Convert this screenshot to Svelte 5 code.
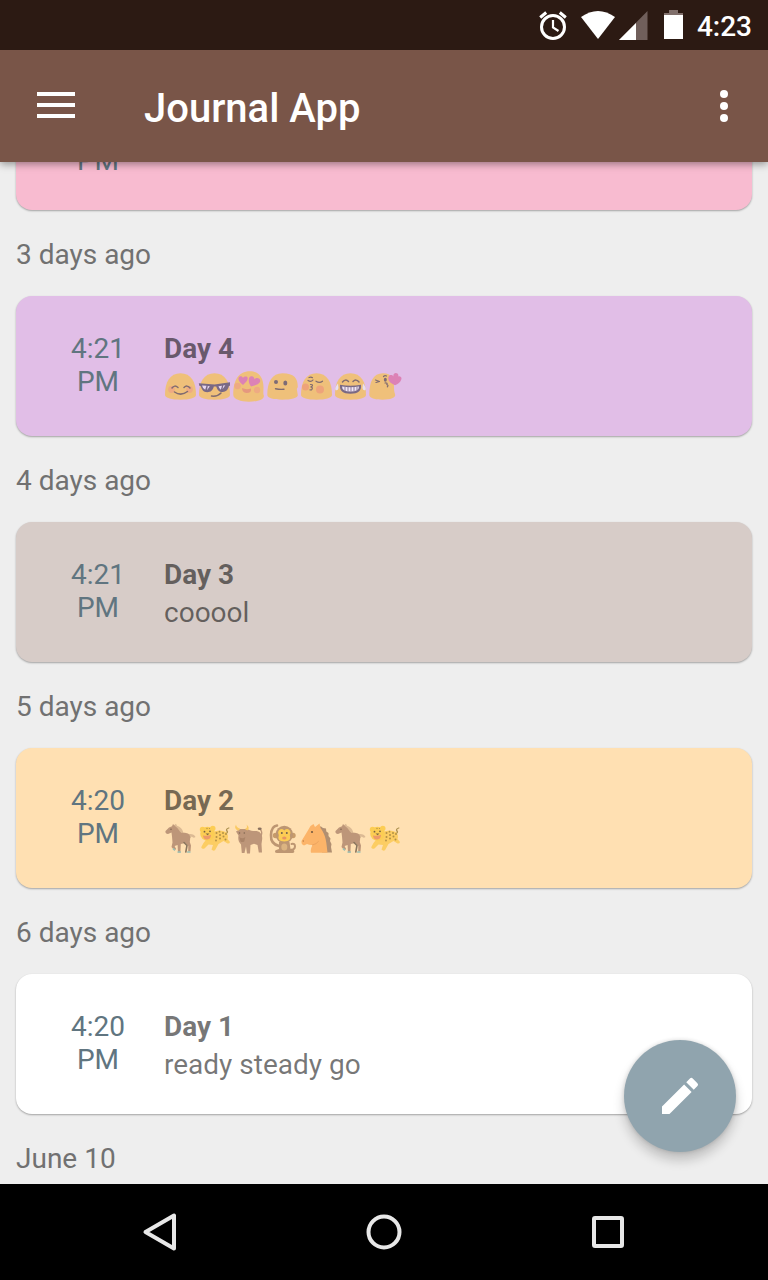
<script>
  const entries = [
    { time: ['PM'], color: '#f8bbd0', cut: true },
    { when: '3 days ago', time: ['4:21', 'PM'], title: 'Day 4', color: '#e1bee7',
      icons: ['smile', 'cool', 'love', 'neutral', 'kiss', 'joy', 'blow'] },
    { when: '4 days ago', time: ['4:21', 'PM'], title: 'Day 3', color: '#d7ccc8', text: 'cooool' },
    { when: '5 days ago', time: ['4:20', 'PM'], title: 'Day 2', color: '#ffe0b2',
      icons: ['horse', 'leopard', 'ox', 'monkey', 'horseface', 'horse', 'leopard'] },
    { when: '6 days ago', time: ['4:20', 'PM'], title: 'Day 1', color: '#ffffff', text: 'ready steady go' }
  ];
  const blob = 'M1 25C1 12 6 3.3 16.5 3.3S32 12 32 25c0 3-7 4.7-15.5 4.7S1 28 1 25z';
</script>

{#snippet emoji(kind)}
  <svg class="emoji" viewBox="0 0 34 34" aria-hidden="true" fill="none" stroke-linecap="round" stroke-linejoin="round">
    {#if kind === 'smile'}
      <path d={blob} fill="#efc07a" />
      <circle cx="7.5" cy="19.5" r="3.4" fill="#eeaa83" /><circle cx="25.5" cy="19.5" r="3.4" fill="#eeaa83" />
      <g stroke="#806b70" stroke-width="1.5"><path d="M8 18q2.500-3.500 6-.5M20 17.500q3-3 6 .5M10.500 22q6.500 4.500 13-.5" /></g>
    {:else if kind === 'cool'}
      <path d={blob} fill="#efc07a" />
      <path d="M.8 13.200l15.700 1.300l15.500-2.300v3.300l-1.200.8c-1 4-3 5.500-6 5.700c-4 0-5.500-2-6.500-5.500h-2.500c-1 4-3 5.700-6.500 5.700c-4-.2-5.500-2.700-6.500-6l-1.500-.5z" fill="#796985" />
      <path d="M4 15.500l4.500.3l-1.300 4q-2.400-1-3.200-4.300zM9.800 16l2 .2l-2.800 4zM20.500 16.200l3.500-.4l-1.200 4q-1.500-1-2.300-3.600zM25.300 15.600l2-.3l-2.800 4z" fill="#e6d6f0" />
      <path d="M13.500 26q6 .8 9.500-3" stroke="#806b70" stroke-width="1.500" />
    {:else if kind === 'love'}
      <path d="M1.300 25C1.300 11 6 1.300 18 1.300C27 1.300 31.500 8 31.500 17c0 4-.5 6.500.3 8.500c1 4-7 6.200-15 6.200S1.300 29 1.300 25z" fill="#efc07a" />
      <circle cx="5.500" cy="16" r="3.200" fill="#eeaa83" /><circle cx="25" cy="20" r="3.200" fill="#eeaa83" />
      <path d="M11 15C8 12.500 6 10.500 6.500 8c.7-2.500 4-2 4.500 0c1-2 5-2 4.700.5c-.2 2.500-2.200 4-4.700 6.500z" fill="#dc82b6" />
      <path d="M19 16.500c-3-4-3-9.500 0-10.200c2-.5 3.500 1 3.500 3c2-2.500 6-1 5.700 1.700c-.2 3-5 4.500-9.200 5.500z" fill="#dc82b6" />
      <path d="M10 18q4 2 9 .5q.8 4.500-4.500 4.500q-4.500-.5-4.500-5z" fill="#e5987f" />
    {:else if kind === 'neutral'}
      <path d="M1.300 25C1.300 12 6 3.300 16.500 3.300C28 3.300 31.800 8 31.800 17l-1 2l1 6c.5 3-7 4.700-15.500 4.700S1.300 28 1.300 25z" fill="#efc07a" />
      <circle cx="10" cy="12" r="2" fill="#7d6b75" /><ellipse cx="19.300" cy="13" rx="2" ry="2.500" fill="#7d6b75" />
      <path d="M9.500 18.700q4.500 1 8.500.5" stroke="#806b70" stroke-width="1.400" />
    {:else if kind === 'kiss'}
      <path d={blob} fill="#efc07a" />
      <circle cx="5.500" cy="17" r="3.500" fill="#eea37b" /><circle cx="20" cy="19.500" r="4" fill="#eea37b" />
      <g stroke="#806b70" stroke-width="1.200"><path d="M8 10.500q3 2 5-.5M16 11.200q3.500 2.500 6.500 0M9 7.500q2-1 3.500.2M10.500 14.500q3-.2 1.500 1.800l-1.200.7q2.700.5.7 3l-1.500-.2" /></g>
    {:else if kind === 'joy'}
      <path d={blob} fill="#efc07a" />
      <g stroke="#806b70" stroke-width="1.500"><path d="M8.500 12q3-3.500 6-.5M19 11.500q3-3 6 .5" /></g>
      <path d="M6 14.700q10.500 2 21 0q1 9-10.500 9T6 14.700z" fill="#796985" />
      <path d="M8 16.500q8.500 1.500 17 0q0 5-8.500 5T8 16.500z" fill="#f0e6f6" />
      <path d="M11 17v3.500M14 17.200v4M17 17.200v4M20 17.200v4M23 17v3" stroke="#8f7d99" stroke-width="1" />
      <path d="M4 13.500Q.5 17.500 1.500 20q2.500 1 3-2zM29 13.500q3.500 4 2.500 6.500q-2.500 1-3-2z" fill="#e7e0f2" />
    {:else if kind === 'blow'}
      <path d="M1.300 25C1.300 12 5 3.300 15 3.300C24 3.300 26 9 26 17c0 3 .3 5 1 7c1.500 4-5 5.700-12.500 5.700S1.300 28 1.300 25z" fill="#efc07a" />
      <path d="M27 15.300C22 13 19.500 10.300 20.500 7c1-2.500 3.500-2.500 5-.5c-.8-3 2-4.500 4-3c1 1 1 1.800.7 3c2-1 4 .8 3 3.200c-.8 2.500-3.200 4-6.200 5.600z" fill="#dc82b6" />
      <g stroke="#806b70" stroke-width="1.200"><path d="M7.500 10l4 1.500l-3.500 1M15.500 6.500q1.500-1.500 3-.5M17 13q3-.3 1.800 1.600q2 .3.500 2.200" /></g>
      <ellipse cx="17.300" cy="9.700" rx="1.500" ry="2" fill="#7d6b75" />
    {:else if kind === 'horse'}
      <path d="M25 12q5-.5 6.500 3q-2 1.500-4-.5q-1 3-3 1z" fill="#dcba94" />
      <path d="M9.500 3.500L12 1.800l1 2q5 1.200 6.500 7.200h-6z" fill="#dcba94" />
      <path d="M9 2l2.500 2.500c3 1.500 3.500 5 6 6.500c4-.5 8 .2 8.500 3.500c.5 2-.2 4-.2 5.500l1.200 3.500l-.5 6h-2.300l.1-5.500l-3-3l-4.500 1l-.4 8.500H14l-.4-7.500l-3 1l1.500 3l-1.600 1.600L7.500 25l1-4.500l-.5-6l-.5-4l-3.500 1.500C2 12 1 10.500 1.500 9L5 5.500l3-1.200z" fill="#bd9679" />
      <path d="M20 20.500l3 3l-1.200 6.500" stroke="#8a765f" stroke-width="1.600" />
      <path d="M14.200 30h2M23.800 30h2M9.500 27l1 .8" stroke="#9bc1b5" stroke-width="1.700" />
      <circle cx="7" cy="7.300" r=".8" fill="#806751" />
    {:else if kind === 'leopard'}
      <path d="M27 11.500q3.500-.5 2-2.500t1.800-3" stroke="#ae9250" stroke-width="1.300" />
      <path d="M14 10q8-3 14 0q3 3.500 1.500 7l2.500 3q-.5 2-2.500 1.500l-4-2.500l-5 3l-3.500 6.300q-2 1-3.500-.8l1.500-4.500l-4.500-.5l-4 4q-2.500 1-3.300-1.200l2.300-4.300z" fill="#fccd63" />
      <circle cx="4.500" cy="7.500" r="2.700" fill="#fccd54" /><circle cx="14.800" cy="6.500" r="2.700" fill="#fccd54" />
      <ellipse cx="9.500" cy="11.800" rx="7.300" ry="7" fill="#fccd54" />
      <path d="M5 13.500q4.500 1 8-.7q0 4.500-3.800 4.700T5 13.500z" fill="#ed9a68" />
      <path d="M7.500 11.500h4L9.600 13.300z" fill="#7d6541" />
      <g fill="#776340"><circle cx="6.500" cy="9.700" r=".9" /><circle cx="12" cy="9.300" r=".9" /></g>
      <g fill="#b39045"><circle cx="18.500" cy="11" r="1" /><circle cx="21.500" cy="9.700" r=".9" /><circle cx="22" cy="13" r="1" /><circle cx="25" cy="11" r="1" /><circle cx="28" cy="12" r="1" /><circle cx="18.500" cy="15" r="1" /><circle cx="25.500" cy="14.500" r="1" /><circle cx="22" cy="16.500" r="1" /><circle cx="18" cy="18.500" r=".9" /><circle cx="27.500" cy="17.500" r="1" /><circle cx="9" cy="6.500" r=".7" /><circle cx="11.500" cy="6.500" r=".6" /></g>
    {:else if kind === 'ox'}
      <path d="M28.500 15Q31 11 28.500 7.500" stroke="#bd9679" stroke-width="1.300" />
      <ellipse cx="27.700" cy="6.800" rx="2" ry="1.300" fill="#8a715f" />
      <path d="M4 9.500l4-2.500h5l3 .5c3 1 4 1.500 7 1.500c5 0 7.500 3 7.200 8l-.7 5l.5 8.500h-3.200l-1.300-7.500l-3.500-1.200l-3.500 1.200l-.5 8.500h-3l-1-7l-1.500 6.500H9.800l-.8-8.500c-3-3-3-6-2.500-9z" fill="#bd9679" />
      <path d="M6.500 8.800Q1.500 7 4 2.500q.3 3 4 4zM13 7q3-1 1.500-4.500q4 3.500.8 6z" fill="#fac963" />
      <path d="M7.300 15q3 2.500 6 0l-1 4.500q-2 1.200-3.800 0z" fill="#aa8468" />
      <g fill="#806751"><circle cx="7.500" cy="11" r=".8" /><circle cx="12.300" cy="11" r=".8" /></g>
    {:else if kind === 'monkey'}
      <path d="M13 24Q4.500 22 5 13T11 3.500" stroke="#bd9672" stroke-width="2.600" />
      <path d="M23 28q6 0 6-3.500t-3.500-2.500" stroke="#bd9672" stroke-width="2" />
      <path d="M13 20h10.500l1 7l3.500 1.300q1 2.500-1.500 2.700H11q-3-.3-1.500-2.700l3.500-1.300z" fill="#bd9672" />
      <circle cx="9.500" cy="13.500" r="2.700" fill="#c79b6a" /><circle cx="27" cy="13.500" r="2.700" fill="#c79b6a" />
      <circle cx="18.300" cy="12.500" r="8.700" fill="#bd9672" />
      <path d="M18.300 8.500q2.500-2.500 5-.5q2 2 .5 5q2 6.500-5.500 6.500t-5.500-6.500q-1.500-3 .5-5q2.500-2 5 .5z" fill="#fccd54" />
      <ellipse cx="18.300" cy="25" rx="3" ry="3.500" fill="#dcb481" />
      <g fill="#72604e"><circle cx="15.800" cy="11" r="1" /><circle cx="20.800" cy="11" r="1" /></g>
      <ellipse cx="18.300" cy="16" rx="2.200" ry="1.500" fill="#e99561" />
    {:else if kind === 'horseface'}
      <path d="M17 4l4 .5l2 1.500l3 .5l.3 3l2.200 1.500v3l2 2.500l-.5 2.500l1.500 3l-.5 3l1 5.500H22z" fill="#b18f71" />
      <path d="M10.500 4l3-2l1.500 3l4.500-3.500l1 4.500C26 13 26.500 21 27.500 30.700H11q-1-3 1.500-7.700q-3 .3-5.500-1l-3 1.500q-3-1-2.500-4.500L7 10z" fill="#fcb469" />
      <circle cx="12" cy="10" r="1.100" fill="#765a40" /><circle cx="3.300" cy="19" r=".7" fill="#ba7c46" />
      <path d="M12.500 23q4-.8 6-3.500" stroke="#eda45f" stroke-width="1" />
    {/if}
  </svg>
{/snippet}

<div class="screen">
  <div class="status">
    <svg width="28" height="30" viewBox="0 0 28 30" fill="none" stroke="#fff" aria-hidden="true">
      <circle cx="14" cy="17" r="11.500" stroke-width="3" /><path d="M14 10v7.500l5.500 3.500" stroke-width="2.200" /><path d="M1.200 7.500l6-5M26.800 7.500l-6-5" stroke-width="3" />
    </svg>
    <svg class="wifi" width="34" height="30" viewBox="0 0 34 30" aria-hidden="true"><path d="M0 7Q17-5 34 7L17 29z" fill="#fff" /></svg>
    <svg class="signal" width="29" height="30" viewBox="0 0 29 30" aria-hidden="true"><path d="M28.500 1v29H0z" fill="#705f5b" /><path d="M17 13v17H0z" fill="#fff" /></svg>
    <svg class="battery" width="19" height="30" viewBox="0 0 19 30" aria-hidden="true"><path d="M5 0h9v3h5v3H0V3h5z" fill="#806f6b" /><path d="M0 5h19v24H0z" fill="#fff" /></svg>
    <span class="clock">4:23</span>
  </div>

  <header>
    <button class="menu" aria-label="Menu">
      <svg width="38" height="26" viewBox="0 0 38 26" fill="#fff"><path d="M0 0h38v4H0zM0 11h38v4H0zM0 22h38v4H0z" /></svg>
    </button>
    <h1>Journal App</h1>
    <button class="more" aria-label="More options">
      <svg width="8" height="32" viewBox="0 0 8 32" fill="#fff"><circle cx="4" cy="4" r="4" /><circle cx="4" cy="16" r="4" /><circle cx="4" cy="28" r="4" /></svg>
    </button>
  </header>

  <main>
    <div class="list">
      {#each entries as e}
        {#if e.when}<h2>{e.when}</h2>{/if}
        <article class:cut={e.cut} style="background-color: {e.color}">
          <div class="time">{#each e.time as part}<div>{part}</div>{/each}</div>
          {#if e.title}
            <div class="body">
              <h3>{e.title}</h3>
              {#if e.icons}
                <div class="emojis">{#each e.icons as kind}{@render emoji(kind)}{/each}</div>
              {:else}
                <p>{e.text}</p>
              {/if}
            </div>
          {/if}
        </article>
      {/each}
      <h2>June 10</h2>
    </div>
    <button class="fab" aria-label="New entry">
      <svg width="48" height="48" viewBox="0 0 24 24" fill="#fff"><path d="M3 17.250V21h3.750L17.810 9.940l-3.750-3.750L3 17.250zM20.710 7.040a.996.996 0 0 0 0-1.410l-2.340-2.340a.996.996 0 0 0-1.410 0l-1.830 1.830 3.750 3.750 1.830-1.830z" /></svg>
    </button>
  </main>

  <nav>
    <button aria-label="Back"><svg width="40" height="40" viewBox="0 0 40 40"><path d="M34 3.500v33L5.500 20z" /></svg></button>
    <button aria-label="Home"><svg width="40" height="40" viewBox="0 0 40 40"><circle cx="20" cy="20" r="15.500" /></svg></button>
    <button aria-label="Recent apps"><svg width="40" height="40" viewBox="0 0 40 40"><rect x="6" y="6" width="28" height="28" rx="1" /></svg></button>
  </nav>
</div>

<style>
  :global(body) { margin: 0; }
  .screen {
    height: 100vh;
    display: flex;
    flex-direction: column;
    background: #eeeeee;
    font-family: Roboto, sans-serif;
    font-size: 28px;
    line-height: 33px;
    overflow: hidden;
  }
  svg { display: block; flex: none; }
  button { border: 0; padding: 0; background: none; cursor: pointer; }
  h1, h2, h3, p { margin: 0; }
  .status {
    height: 50px;
    flex: none;
    display: flex;
    align-items: center;
    justify-content: flex-end;
    padding-right: 16px;
    background: #2c1a13;
    color: #fff;
    position: relative;
    z-index: 2;
  }
  .wifi { margin-left: 14px; }
  .signal { margin-left: 4px; }
  .battery { margin-left: 16px; }
  .clock { margin-left: 14px; padding-top: 2px; font-weight: 500; }
  header {
    height: 112px;
    box-sizing: border-box;
    flex: none;
    display: flex;
    align-items: center;
    padding: 0 40px 0 37px;
    background: #795548;
    box-shadow: 0 2px 8px rgba(0, 0, 0, 0.4);
    position: relative;
    z-index: 1;
  }
  h1 {
    flex: 1;
    margin-left: 69px;
    padding-top: 6px;
    font-size: 40px;
    line-height: 48px;
    font-weight: 500;
    color: #fff;
  }
  .menu { padding-bottom: 2px; }
  main { flex: 1; min-height: 0; position: relative; overflow: hidden; }
  .list { margin-top: -30px; padding: 0 16px; }
  h2 {
    padding: 28px 0 25px;
    font-size: 28px;
    font-weight: 400;
    color: #717171;
  }
  article {
    min-height: 140px;
    box-sizing: border-box;
    display: flex;
    gap: 16px;
    padding: 36px 32px 32px;
    border-radius: 16px;
    box-shadow: 0 1px 2px rgba(0, 0, 0, 0.32);
  }
  article.cut { min-height: 0; padding: 12px 32px 33px; }
  .time { width: 100px; flex: none; text-align: center; color: #607580; }
  .body { display: flex; flex-direction: column; gap: 5px; color: rgba(0, 0, 0, 0.54); }
  h3 { font-size: 28px; font-weight: 700; }
  .emojis { display: flex; height: 34px; }
  .emoji { width: 34px; height: 34px; }
  .fab {
    position: absolute;
    right: 32px;
    bottom: 32px;
    width: 112px;
    height: 112px;
    display: grid;
    place-items: center;
    border-radius: 50%;
    background: #90a4ae;
    box-shadow: 0 8px 12px rgba(0, 0, 0, 0.2), 0 0 4px rgba(0, 0, 0, 0.14);
  }
  nav {
    height: 96px;
    box-sizing: border-box;
    flex: none;
    display: grid;
    grid-template-columns: repeat(3, 1fr);
    padding: 0 48px;
    background: #000;
  }
  nav button { display: grid; place-items: center; }
  nav svg { fill: none; stroke: #e8e8e8; stroke-width: 4; stroke-linejoin: round; }
</style>
